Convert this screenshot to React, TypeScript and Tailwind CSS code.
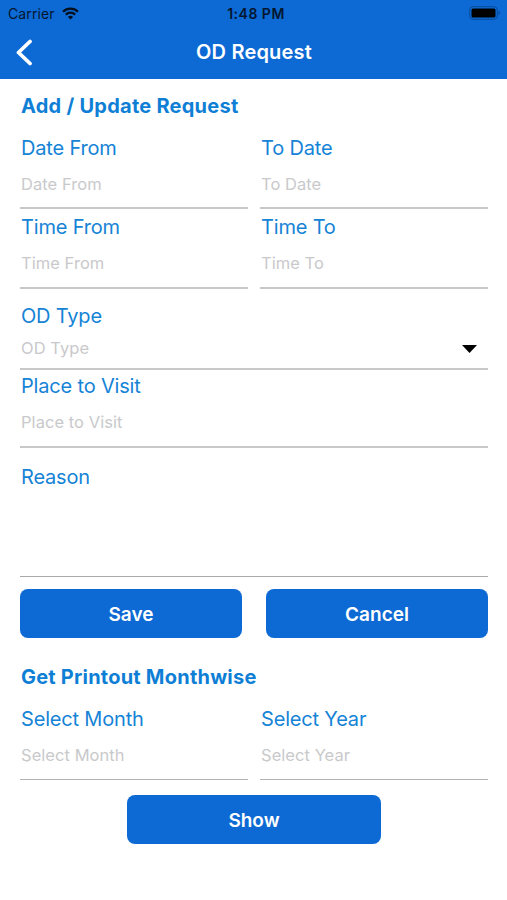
import clsx from 'clsx';

interface FieldProps {
  label: string;
  className?: string;
  valueClass?: string;
  dropdown?: boolean;
}

function Field({ label, className, valueClass = 'h-[48px] border-b-2 border-[#c8c8c8] pb-px', dropdown }: FieldProps) {
  return (
    <div className={clsx('flex flex-col', className)}>
      <div className="h-[26px] pl-px text-[20px] leading-[26px] tracking-[-0.18px] text-[#1583d6]">{label}</div>
      <div className={clsx('flex items-center justify-between pl-px', valueClass)}>
        <span className="text-[16.5px] leading-[20px] tracking-[0.05px] text-[#c9c9cb]">{label}</span>
        {dropdown && (
          <svg className="mr-[11px] mt-[1px] h-[8px] w-[15px]" viewBox="0 0 15 8">
            <path d="M0 0h15L7.5 8z" fill="#000" />
          </svg>
        )}
      </div>
    </div>
  );
}

function PrimaryButton({ children, className }: { children: string; className: string }) {
  return (
    <button className={clsx('h-[49px] rounded-[8px] bg-[#0d6ad4] pt-[2px] text-[19px] font-semibold leading-[24px] text-white', className)}>
      {children}
    </button>
  );
}

function StatusBar() {
  return (
    <div className="grid h-[27px] grid-cols-3 items-center pl-[8px] pr-[6px] text-[14px] leading-[18px] text-[#04162e]">
      <div className="flex items-center gap-[7px]">
        <span className="tracking-[0.1px]">Carrier</span>
        <svg className="h-[13px] w-[17px]" viewBox="0 0 17 13" fill="none" stroke="#04101f" strokeWidth="2.3">
          <path d="M1 4.7a10.7 10.7 0 0 1 15 0" />
          <path d="M3.8 7.6a6.8 6.8 0 0 1 9.4 0" />
          <path d="M8.5 12.5 5.9 9.9a3.8 3.8 0 0 1 5.2 0z" fill="#04101f" stroke="none" />
        </svg>
      </div>
      <span className="pl-[3px] text-center font-semibold tracking-[0.5px]">1:48 PM</span>
      <svg className="mb-[1px] h-[14px] w-[32px] justify-self-end" viewBox="0 0 32 14">
        <rect x="0.7" y="0.7" width="27.6" height="12.6" rx="3.2" fill="none" stroke="#084a98" />
        <rect x="2.5" y="2.5" width="24" height="9" rx="1.5" fill="#000" />
        <path d="M29.5 4.8a2.4 2.4 0 0 1 0 4.4z" fill="#084a98" />
      </svg>
    </div>
  );
}

export default function App() {
  return (
    <div className="flex h-[900px] w-[507px] flex-col bg-white font-['Inter',sans-serif]">
      <header className="h-[79px] bg-[#0d6ad4]">
        <StatusBar />
        <div className="grid h-[50px] grid-cols-[60px_1fr_60px] items-center">
          <svg className="ml-[15px] h-[28px] w-[18px]" viewBox="0 0 18 28" fill="none" stroke="#fff" strokeWidth="3.8" strokeLinecap="round" strokeLinejoin="round">
            <path d="M15 3.5 3.5 14.5 15 25.5" />
          </svg>
          <h1 className="pl-px text-center text-[20px] font-semibold tracking-[0.2px] text-white">OD Request</h1>
        </div>
      </header>

      <main className="flex flex-col pl-[20px] pr-[19px] pt-[14px]">
        <h2 className="h-[26px] pl-px text-[20px] font-bold leading-[26px] tracking-[0.25px] text-[#0f7fd6]">
          Add / Update Request
        </h2>

        <div className="mt-[16px] grid grid-cols-2 gap-x-[12px] gap-y-[5px]">
          <Field label="Date From" />
          <Field label="To Date" />
          <Field label="Time From" valueClass="h-[49px] border-b-2 border-[#c8c8c8] pb-[2px]" />
          <Field label="Time To" valueClass="h-[49px] border-b-2 border-[#c8c8c8] pb-[2px]" />
        </div>

        <Field label="OD Type" className="mt-[14px]" valueClass="h-[41px] border-b-2 border-[#c8c8c8] pb-px" dropdown />
        <Field label="Place to Visit" className="mt-[3px]" valueClass="h-[49px] border-b-2 border-[#c8c8c8] pb-px" />

        <div className="mt-[16px] h-[113px] border-b border-[#a9a9a9] pl-px text-[20px] leading-[26px] tracking-[-0.18px] text-[#1583d6]">
          Reason
        </div>

        <div className="mt-[12px] grid grid-cols-2 gap-x-[24px]">
          <PrimaryButton className="w-full">Save</PrimaryButton>
          <PrimaryButton className="w-full">Cancel</PrimaryButton>
        </div>

        <h2 className="mt-[26px] h-[26px] pl-px text-[20px] font-bold leading-[26px] tracking-[0.22px] text-[#0f7fd6]">
          Get Printout Monthwise
        </h2>

        <div className="mt-[16px] grid grid-cols-2 gap-x-[12px]">
          <Field label="Select Month" valueClass="h-[48px] border-b border-[#b4b4b4] pb-[2px]" />
          <Field label="Select Year" valueClass="h-[48px] border-b border-[#b4b4b4] pb-[2px]" />
        </div>

        <PrimaryButton className="mt-[15px] w-[254px] self-center">Show</PrimaryButton>
      </main>
    </div>
  );
}
